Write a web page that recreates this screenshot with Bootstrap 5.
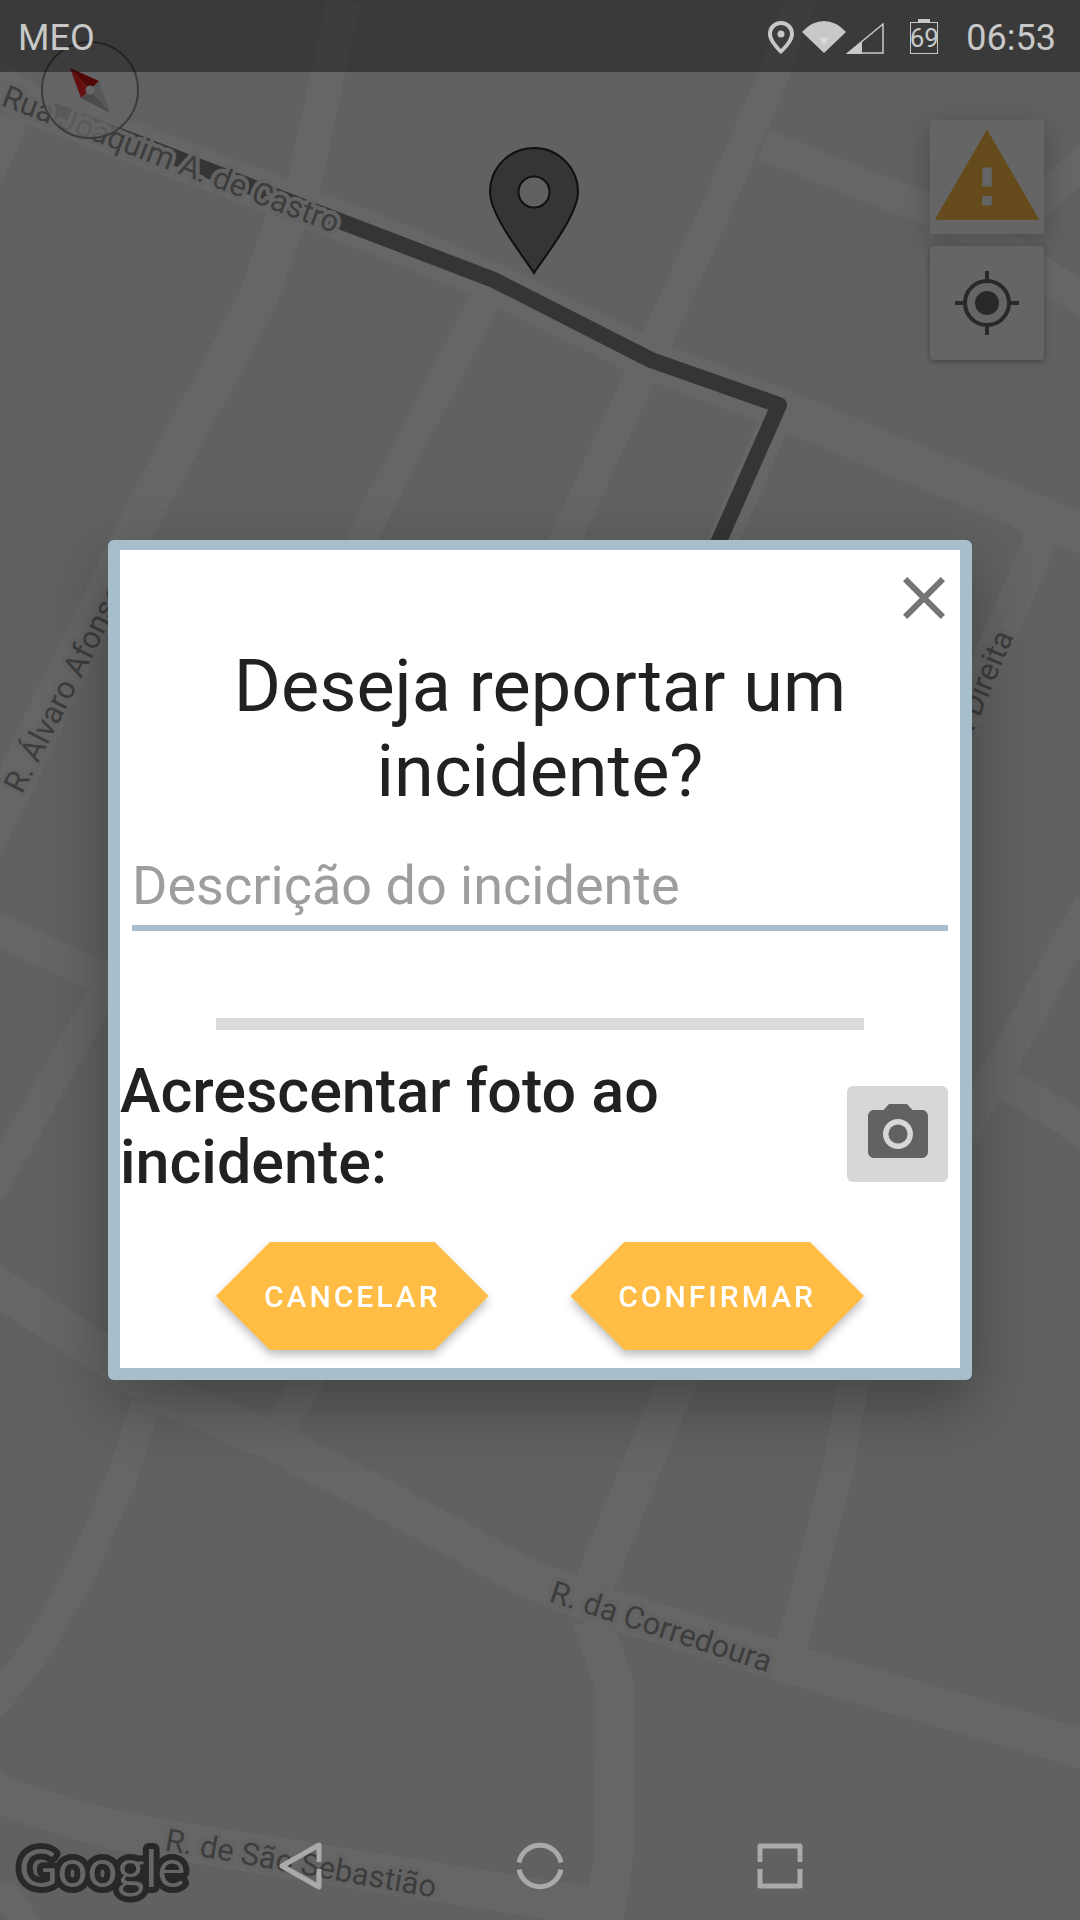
<!DOCTYPE html>
<html lang="pt">
<head>
<meta charset="utf-8">
<meta name="viewport" content="width=device-width, initial-scale=1">
<title>Reportar incidente</title>
<link href="https://cdn.jsdelivr.net/npm/bootstrap@5.3.0/dist/css/bootstrap.min.css" rel="stylesheet">
<style>
  body { font-family: Roboto, "Liberation Sans", sans-serif; background: #616161; color: #212121; }
  svg { display: block; }
  .map-road { fill: none; stroke: #666; stroke-linejoin: round; }
  .map-label { font-size: 31px; fill: #3d3d3d; stroke: #636363; stroke-width: 8px; stroke-linejoin: round; paint-order: stroke; }
  .map-logo { font-family: Lato, Roboto, sans-serif; font-size: 53px; fill: #666; stroke: #282828; stroke-width: 12px; stroke-linejoin: round; paint-order: stroke; }

  .status-bar { height: 72px; padding: 4px 24px 0 18px; background: rgba(0, 0, 0, .4); color: #c8c8c8; font-size: 36px; line-height: 1; z-index: 2; }
  .status-bar svg { fill: #c8c8c8; }
  .battery { width: 28px; height: 32px; border: 1px solid #c8c8c8; font-size: 26px; line-height: 30px; }
  .battery::before { content: ""; position: absolute; top: -4px; left: 7px; width: 12px; height: 4px; background: #c8c8c8; }

  .compass { top: 40px; left: 40px; width: 100px; height: 100px; z-index: 1; }
  .map-tools { gap: 12px; padding: 48px 36px; }
  .map-tool { width: 114px; height: 114px; border-radius: 4px; background: #656565; box-shadow: 0 2px 6px rgba(0, 0, 0, .3); }
  .map-tool-raised { border-radius: 0; box-shadow: 0 8px 28px rgba(0, 0, 0, .24); }

  .report-dialog { width: 80%; border: 12px solid #a7bfcd; border-top-width: 10px; border-radius: 6px; background: #fff; box-shadow: 0 24px 64px rgba(0, 0, 0, .32); }
  .dialog-title { margin: 10px 0 40px; font-size: 72px; line-height: 85px; font-weight: 400; }
  .report-input { height: 77px; padding: 0 0 8px; border: 0; border-bottom: 6px solid #a7bfcd; border-radius: 0; background: transparent; font-size: 54px; line-height: 63px; color: #212121; }
  .report-input::placeholder { color: #9e9e9e; opacity: 1; }
  .report-input:focus { box-shadow: none; border-color: #a7bfcd; }
  .divider { height: 12px; margin: 87px 96px 26px; background: #dadada; }
  .photo-label { font-size: 61px; line-height: 71px; font-weight: 500; }
  .camera-btn { width: 101px; height: 96px; margin: 0 12px 16px; border-radius: 6px; background: #d6d8d7; }
  .dialog-actions { padding: 44px 96px 18px; }
  .hex-btn { position: relative; z-index: 0; height: 108px; padding: 0 48px; border: 0; color: #fff; font-size: 30px; font-weight: 500; letter-spacing: 3px; filter: drop-shadow(0 5px 4px rgba(0, 0, 0, .25)); }
  .hex-btn::before { content: ""; position: absolute; inset: 0; z-index: -1; background: #ffbd45; clip-path: polygon(54px 0, calc(100% - 54px) 0, 100% 50%, calc(100% - 54px) 100%, 54px 100%, 0 50%); }
  .hex-btn:hover, .hex-btn:active { color: #fff; }

  .nav-keys { height: 108px; padding: 0 180px; }
  .nav-keys svg { fill: none; stroke: #aaa; stroke-width: 5; stroke-linejoin: round; }
</style>
</head>
<body>
<div class="position-relative d-flex flex-column min-vh-100 overflow-hidden">

  <svg class="position-absolute top-0 start-0 w-100 h-100" viewBox="0 0 1080 1920" preserveAspectRatio="xMidYMid slice" role="img" aria-label="Mapa">
    <rect width="1080" height="1920" fill="#616161"/>
    <!-- streets -->
    <g class="map-road">
      <path stroke-width="34" d="M344 0L304 184 258 300"/>
      <path stroke-width="39" d="M288 210L258 300 150 500 0 812-20 852"/>
      <path stroke-width="32" d="M13 118L-24 202"/>
      <path stroke-width="30" d="M485 300L381 500 340 585"/>
      <path stroke-width="31" d="M804-10L775 72 718 205 657 339 640 376 555 562"/>
      <path stroke-width="32" d="M763 144L870 187 930 210 965 225 1010 250 1090 305"/>
      <path stroke-width="32" d="M965 228L1000 220 1047 195 1090 156"/>
      <path stroke-width="31" d="M773 425L715 560"/>
      <path stroke-width="33" d="M1046 527L955 740"/>
      <path stroke-width="32" d="M1090 904L1048 980 990 1085 955 1145M1000 1082L1055 1112 1090 1137"/>
      <path stroke-width="32" d="M-10 926L98 976 125 990"/>
      <path stroke-width="30" d="M118 965L-10 1193"/>
      <path stroke-width="40" d="M-20 72L29 104 272 194 400 244 494 283 648 359 786 411 1024 510 1090 537"/>
      <path stroke-width="39" d="M-10 1282L108 1357 165 1395 270 1440 400 1508 525 1577 592 1603 790 1664 1090 1751"/>
      <path stroke-width="30" d="M146 1404L121 1480 82 1570 38 1648 0 1696-20 1715"/>
      <path stroke-width="31" d="M320 1360L282 1425"/>
      <path stroke-width="39" d="M685 1364L640 1470 592 1590"/>
      <path stroke-width="31" d="M857 1364L837 1474 791 1650"/>
      <path stroke-width="39" d="M592 1620L615 1688 614 1855 602 1930"/>
      <path stroke-width="39" d="M-10 1788L18 1802 105 1828 170 1840 530 1897 600 1907"/>
      <path stroke-width="28" stroke-linecap="round" d="M8 1896L36 1940"/>
    </g>
    <!-- route -->
    <path d="M52 110L345 223 494 280 651 360 779 405 715 550" fill="none" stroke="#353535" stroke-width="16" stroke-linejoin="round"/>
    <!-- street names -->
    <text class="map-label" transform="translate(0 105) rotate(21)">Rua Joaquim A. de Castro</text>
    <text class="map-label" transform="translate(22 795) rotate(-63)">R. Álvaro Afonso</text>
    <text class="map-label" transform="translate(1014 636) rotate(-67)" text-anchor="end">R. Direita</text>
    <text class="map-label" transform="translate(548 1601) rotate(18)">R. da Corredoura</text>
    <text class="map-label" transform="translate(164 1850) rotate(10)">R. de São Sebastião</text>
    <text class="map-logo" x="19" y="1887">Google</text>
    <!-- destination pin -->
    <path d="M534 273C526 260 490 216 490 192a44 44 0 0 1 88 0C578 216 542 260 534 273Z" fill="#353535" stroke="#101010" stroke-width="2"/>
    <circle cx="534" cy="192" r="15.500" fill="#616161" stroke="#101010" stroke-width="2"/>
  </svg>

  <header class="status-bar position-relative d-flex align-items-center">
    <span class="me-auto">MEO</span>
    <svg class="me-2" width="26" height="34" viewBox="0 0 26 34" aria-hidden="true"><path fill-rule="evenodd" d="M13 0C5.500 0 0 5.500 0 13c0 9 13 20 13 20s13-11 13-20C26 5.500 20.500 0 13 0Zm0 4c5 0 9 4 9 9 0 5-6 12-9 15-3-3-9-10-9-15 0-5 4-9 9-9Z"/><circle cx="13" cy="13" r="3.500"/></svg>
    <svg width="44" height="36" viewBox="0 0 44 36" aria-hidden="true"><path d="M0 12Q10 1 22 1t22 11L22 33Z"/><path fill="#dcdcdc" d="M18 18h8l-4 7Z"/></svg>
    <svg width="40" height="34" viewBox="0 0 40 34" aria-hidden="true"><path d="M0 33L16 20V33Z"/><path fill="none" stroke="#c8c8c8" stroke-width="1.500" d="M2 32L37 3V32Z"/></svg>
    <span class="battery position-relative d-flex justify-content-center ms-4 me-4">69</span>
    <span class="ms-1">06:53</span>
  </header>

  <button type="button" class="compass btn p-0 border-0 position-absolute" aria-label="Bússola">
    <svg width="100" height="100" viewBox="0 0 100 100"><circle cx="50" cy="50" r="48" fill="#666" fill-opacity=".75" stroke="#3c3c3c" stroke-width="2"/><path fill="#520808" d="M30 28L59 41 50 50Z"/><path fill="#651010" d="M30 28L50 50 41 58Z"/><path fill="#585858" d="M59 41L70 73 50 50Z"/><path fill="#4b4b4b" d="M70 73L41 58 50 50Z"/><circle cx="50" cy="50" r="4.500" fill="#666"/></svg>
  </button>

  <div class="map-tools position-relative d-flex flex-column align-items-end">
    <button type="button" class="map-tool map-tool-raised btn p-0 border-0" aria-label="Reportar incidente">
      <svg width="114" height="114" viewBox="0 0 24 24" fill="#654b1b"><path d="M1 21h22L12 2 1 21zm12-3h-2v-2h2v2zm0-4h-2v-4h2v4z"/></svg>
    </button>
    <button type="button" class="map-tool btn p-0 border-0 d-flex align-items-center justify-content-center" aria-label="A minha localização">
      <svg width="64" height="64" viewBox="0 0 64 64" fill="none" stroke="#292929" stroke-width="4"><circle cx="32" cy="32" r="22"/><circle cx="32" cy="32" r="12" fill="#292929" stroke="none"/><path d="M32 0v9M32 55v9M0 32h9M55 32h9"/></svg>
    </button>
  </div>

  <nav class="nav-keys position-relative d-flex align-items-center mt-auto" aria-label="Navegação do sistema">
    <button type="button" class="btn p-0 border-0 flex-fill d-flex justify-content-center" aria-label="Voltar"><svg width="48" height="48" viewBox="0 0 48 48"><path d="M43 20V3L6 24 43 45V27"/></svg></button>
    <button type="button" class="btn p-0 border-0 flex-fill d-flex justify-content-center" aria-label="Início"><svg width="48" height="48" viewBox="0 0 48 48"><path d="M3 20.500A21.400 21.400 0 0 1 45 20.500M3 27.500A21.400 21.400 0 0 0 45 27.500"/></svg></button>
    <button type="button" class="btn p-0 border-0 flex-fill d-flex justify-content-center" aria-label="Recentes"><svg width="48" height="48" viewBox="0 0 48 48"><path d="M4 20V4H44V20M4 27V44H44V27"/></svg></button>
  </nav>

  <div class="position-absolute top-0 start-0 w-100 h-100 d-flex align-items-center justify-content-center">
    <form class="report-dialog" role="dialog" aria-labelledby="dialog-title">
      <div class="d-flex justify-content-end pt-2">
        <button type="button" class="btn p-0 border-0 mt-1" aria-label="Fechar"><svg width="72" height="72" viewBox="0 0 24 24" fill="#757575"><path d="M19 6.410L17.590 5 12 10.590 6.410 5 5 6.410 10.590 12 5 17.590 6.410 19 12 13.410 17.590 19 19 17.590 13.410 12z"/></svg></button>
      </div>
      <h1 class="dialog-title text-center px-5" id="dialog-title">Deseja reportar um incidente?</h1>
      <div class="px-2 mx-1">
        <label class="visually-hidden" for="description">Descrição do incidente</label>
        <input class="report-input form-control" id="description" type="text" placeholder="Descrição do incidente">
      </div>
      <div class="divider"></div>
      <div class="d-flex align-items-end">
        <label class="photo-label flex-grow-1" for="photo">Acrescentar foto ao incidente:</label>
        <button type="button" id="photo" class="camera-btn btn p-0 border-0 flex-shrink-0 d-flex align-items-center justify-content-center">
          <svg width="72" height="72" viewBox="0 0 24 24" fill="#616362"><circle cx="12" cy="12" r="3.200"/><path d="M9 2L7.170 4H4c-1.100 0-2 .9-2 2v12c0 1.100.9 2 2 2h16c1.100 0 2-.9 2-2V6c0-1.100-.9-2-2-2h-3.170L15 2H9zm3 15c-2.760 0-5-2.240-5-5s2.240-5 5-5 5 2.240 5 5-2.240 5-5 5z"/></svg>
        </button>
      </div>
      <div class="dialog-actions d-flex justify-content-between">
        <button type="button" class="hex-btn btn">CANCELAR</button>
        <button type="submit" class="hex-btn btn">CONFIRMAR</button>
      </div>
    </form>
  </div>
</div>
<script src="https://cdn.jsdelivr.net/npm/bootstrap@5.3.0/dist/js/bootstrap.bundle.min.js"></script>
</body>
</html>
